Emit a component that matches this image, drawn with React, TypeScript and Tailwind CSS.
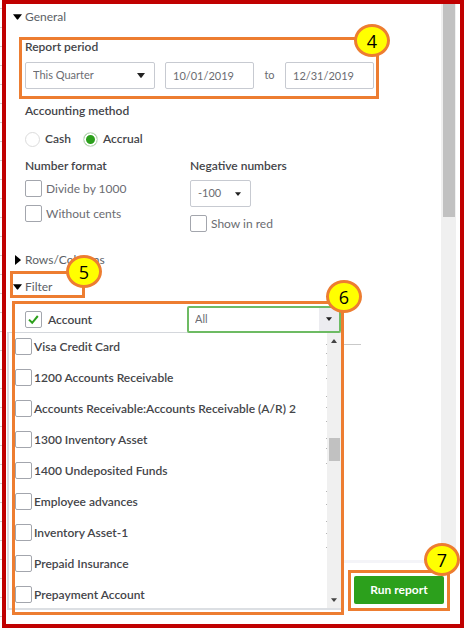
import { useState } from "react";
import type { ReactNode } from "react";

const accounts = [
  "Visa Credit Card",
  "1200 Accounts Receivable",
  "Accounts Receivable:Accounts Receivable (A/R) 2",
  "1300 Inventory Asset",
  "1400 Undeposited Funds",
  "Employee advances",
  "Inventory Asset-1",
  "Prepaid Insurance",
  "Prepayment Account",
];

function Triangle({ className }: { className: string }) {
  return (
    <svg viewBox="0 0 8 5" className={className} aria-hidden="true">
      <path d="M0 0H8L4.6 4.6Q4 5.2 3.4 4.6Z" fill="currentColor" />
    </svg>
  );
}

function Step({ n, className }: { n: number; className: string }) {
  return (
    <span
      className={`absolute z-20 flex h-[33px] w-9 items-center justify-center rounded-[50%] border-3 border-[#ed7d31] bg-[#ffff00] font-['Open_Sans',sans-serif] text-lg leading-5 text-black ${className}`}
    >
      {n}
    </span>
  );
}

// orange outline drawn over a group of controls
function Outline({ className }: { className: string }) {
  return (
    <div className={`pointer-events-none absolute z-10 border-3 border-[#ed7d31] ${className}`} />
  );
}

function SectionToggle({ open, children }: { open: boolean; children: ReactNode }) {
  return (
    <button type="button" aria-expanded={open} className="flex h-5 items-center text-xs text-[#5c5f66]">
      <span className="flex w-3 justify-center">
        {open ? (
          <Triangle className="h-[6px] w-[9px] shrink-0 text-black" />
        ) : (
          <svg viewBox="0 0 6 10" className="ml-0.5 h-2.5 w-1.5 shrink-0 text-black" aria-hidden="true">
            <path d="M0 0L5.5 4.5Q6 5 5.5 5.5L0 10Z" fill="currentColor" />
          </svg>
        )}
      </span>
      {children}
    </button>
  );
}

function Tick({ label, checked, className }: { label: string; checked?: boolean; className: string }) {
  const [on, setOn] = useState(Boolean(checked));
  return (
    <label className={`flex h-[17px] items-center whitespace-nowrap text-xs leading-[17px] ${className}`}>
      <span className="relative size-[17px] shrink-0">
        <input
          type="checkbox"
          checked={on}
          onChange={() => setOn(!on)}
          className="block size-[17px] appearance-none rounded-[2px] border border-[#a3a6ad] bg-white"
        />
        {on && (
          <svg viewBox="0 0 17 17" className="pointer-events-none absolute inset-0" aria-hidden="true">
            <path d="M4 8.6L7.2 11.8L12.8 5" fill="none" stroke="#2ca01c" strokeWidth="2" />
          </svg>
        )}
      </span>
      {label}
    </label>
  );
}

export default function App() {
  return (
    <main className="min-h-screen bg-white bg-[linear-gradient(#cfcfcf_1px,transparent_1px)] bg-[length:100%_19px] bg-[position:0_8px] pb-px pl-0.5 font-[Lato,sans-serif] text-[#444549]">
      <div className="border-4 border-[#c00000] bg-white pb-[9px] shadow-[0_1px_0_#8f8f8f]">
        <div className="flex">
          <div className="min-w-0 flex-1 pt-[3px] pl-[5px]">
            <SectionToggle open>
              <span className="pl-0.5">General</span>
            </SectionToggle>

            <div className="relative mt-2.5 mr-[62px] ml-2 pr-[5px] pl-1.5">
              <Outline className="inset-x-0 top-0 -bottom-[10px]" />
              <Step n={4} className="-top-[13px] -right-[11px]" />
              <label htmlFor="period" className="block h-5 text-xs leading-5 font-semibold">
                Report period
              </label>
              <div className="mt-[5px] flex h-[27px] items-center text-[11px] text-[#6b6c72]">
                <div className="relative h-full w-[130px]">
                  <select
                    id="period"
                    className="h-full w-full appearance-none rounded-[2px] border border-[#c7cad1] bg-white pl-[7px]"
                  >
                    <option>This Quarter</option>
                  </select>
                  <Triangle className="pointer-events-none absolute top-[11px] right-2.5 h-[5px] w-2 text-[#222]" />
                </div>
                <input
                  aria-label="From date"
                  defaultValue="10/01/2019"
                  className="ml-2.5 h-full w-[89px] rounded-[2px] border border-[#c7cad1] bg-white pl-[7px]"
                />
                <span className="min-w-0 flex-1 text-center">to</span>
                <input
                  aria-label="To date"
                  defaultValue="12/31/2019"
                  className="h-full w-[89px] rounded-[2px] border border-[#c7cad1] bg-white pl-[7px]"
                />
              </div>
            </div>

            <fieldset className="mt-3 ml-3.5">
              <legend className="h-5 text-xs leading-5 font-semibold">Accounting method</legend>
              <div className="mt-2 flex h-5 items-center gap-3 text-xs font-semibold">
                <label className="flex items-center gap-[5px]">
                  <input
                    type="radio"
                    name="method"
                    className="size-[15px] appearance-none rounded-full border border-[#dcdcdc] checked:border-[#e4e7e4] checked:bg-[#2ca01c] checked:shadow-[inset_0_0_0_2px_#fff]"
                  />
                  Cash
                </label>
                <label className="flex items-center gap-[5px]">
                  <input
                    type="radio"
                    name="method"
                    defaultChecked
                    className="size-[15px] appearance-none rounded-full border border-[#dcdcdc] checked:border-[#e4e7e4] checked:bg-[#2ca01c] checked:shadow-[inset_0_0_0_2px_#fff]"
                  />
                  Accrual
                </label>
              </div>
            </fieldset>

            <div className="mt-[7px] ml-3.5 flex">
              <div className="w-[165px]">
                <h3 className="h-5 text-xs leading-5 font-semibold">Number format</h3>
                <Tick label="Divide by 1000" className="mt-1 gap-1 text-[#6b6c72]" />
                <Tick label="Without cents" className="mt-2 gap-1 text-[#6b6c72]" />
              </div>
              <div>
                <label htmlFor="negative" className="block h-5 text-xs leading-5 font-semibold">
                  Negative numbers
                </label>
                <div className="relative mt-1 h-[27px] w-[61px] text-[11px] text-[#6b6c72]">
                  <select
                    id="negative"
                    className="h-full w-full appearance-none rounded-[2px] border border-[#c7cad1] bg-white pl-[7px]"
                  >
                    <option>-100</option>
                  </select>
                  <Triangle className="pointer-events-none absolute top-3 right-2.5 h-1 w-1.5 text-[#222]" />
                </div>
                <Tick label="Show in red" className="mt-2 gap-1 text-[#6b6c72]" />
              </div>
            </div>

            <div className="mt-[18px]">
              <SectionToggle open={false}>
                <span className="pl-0.5">Rows/Columns</span>
              </SectionToggle>
            </div>
            <div className="relative mt-[7px] mb-1 w-[73px]">
              <Outline className="-inset-x-px -top-[6px] -bottom-px" />
              <Step n={5} className="-top-[22px] -right-[18px]" />
              <SectionToggle open>
                <span className="pl-0.5">Filter</span>
              </SectionToggle>
            </div>
          </div>
          <div className="mr-1 w-[15px] bg-[#f0f0f0] px-0.5">
            <div className="h-[213px] w-3 bg-[#c1c1c1]" />
          </div>
        </div>

        <div className="flex">
          <section className="relative min-w-0 flex-1 pt-[5px] pb-[5px] pl-px">
            <Outline className="inset-y-0 right-0 left-1.5" />
            <Step n={6} className="-top-[21px] -right-[18px]" />
            <div className="flex h-[27px] items-center justify-between border-b border-[#d4d7dc] pr-[3px] pl-[18px]">
              <Tick label="Account" checked className="gap-1.5 font-semibold" />
              <div className="relative h-[27px] w-[154px] text-[11px] text-[#6b6c72]">
                <select
                  aria-label="Account filter"
                  className="h-full w-full appearance-none rounded-[2px] border-2 border-[#6dbb63] bg-white pl-1.5"
                >
                  <option>All</option>
                </select>
                <span className="pointer-events-none absolute top-0.5 right-0.5 bottom-0.5 flex w-5 items-center justify-center bg-[#ececf0]">
                  <Triangle className="h-1 w-1.5 text-[#222]" />
                </span>
              </div>
            </div>
            <div className="flex border-b-2 border-l-2 border-[#dcdfe3] pr-[3px]">
              <ul className="flex min-w-0 flex-1 flex-col gap-3.5 pt-[5px] pb-1 pl-1.5">
                {accounts.map((name) => (
                  <li key={name}>
                    <Tick label={name} className="gap-0.5 font-semibold" />
                  </li>
                ))}
              </ul>
              <svg viewBox="0 0 1 275" className="h-[275px] w-px" aria-hidden="true">
                <path
                  d="M0 11.5h1M0 20.5h1M0 32.5h1M0 45.5h1M0 63.5h1M0 74.5h1M0 88.5h1M0 105.5h1M0 115.5h1M0 130.5h1M0 158.5h1M0 171.5h1M0 188.5h1M0 200.5h1M0 214.5h1"
                  stroke="#b5b5b5"
                />
              </svg>
              <div className="flex w-3.5 flex-col items-center bg-[#f0f0f0] py-1.5">
                <Triangle className="h-1 w-1.5 rotate-180 text-[#444]" />
                <div className="mt-[95px] mb-auto h-[23px] w-[11px] bg-[#c1c1c1]" />
                <Triangle className="h-1 w-1.5 text-[#444]" />
              </div>
            </div>
          </section>

          <div className="flex w-[116px] flex-col">
            <div className="flex flex-1">
              <div className="flex-1 border-b-3 border-[#f4f4f8] pt-[43px]">
                <hr className="w-[17px] border-[#c9c9c9]" />
              </div>
              <div className="mr-1 w-[15px] bg-[#f0f0f0]" />
            </div>
            <div className="relative h-[52px] pt-[13px] pl-2.5">
              <Outline className="top-[7px] right-2.5 bottom-1 left-1" />
              <Step n={7} className="-top-5 right-0" />
              <button
                type="button"
                className="h-7 w-[90px] rounded-[2px] bg-[#2ca01c] text-xs font-bold text-white"
              >
                Run report
              </button>
            </div>
          </div>
        </div>
      </div>
    </main>
  );
}
